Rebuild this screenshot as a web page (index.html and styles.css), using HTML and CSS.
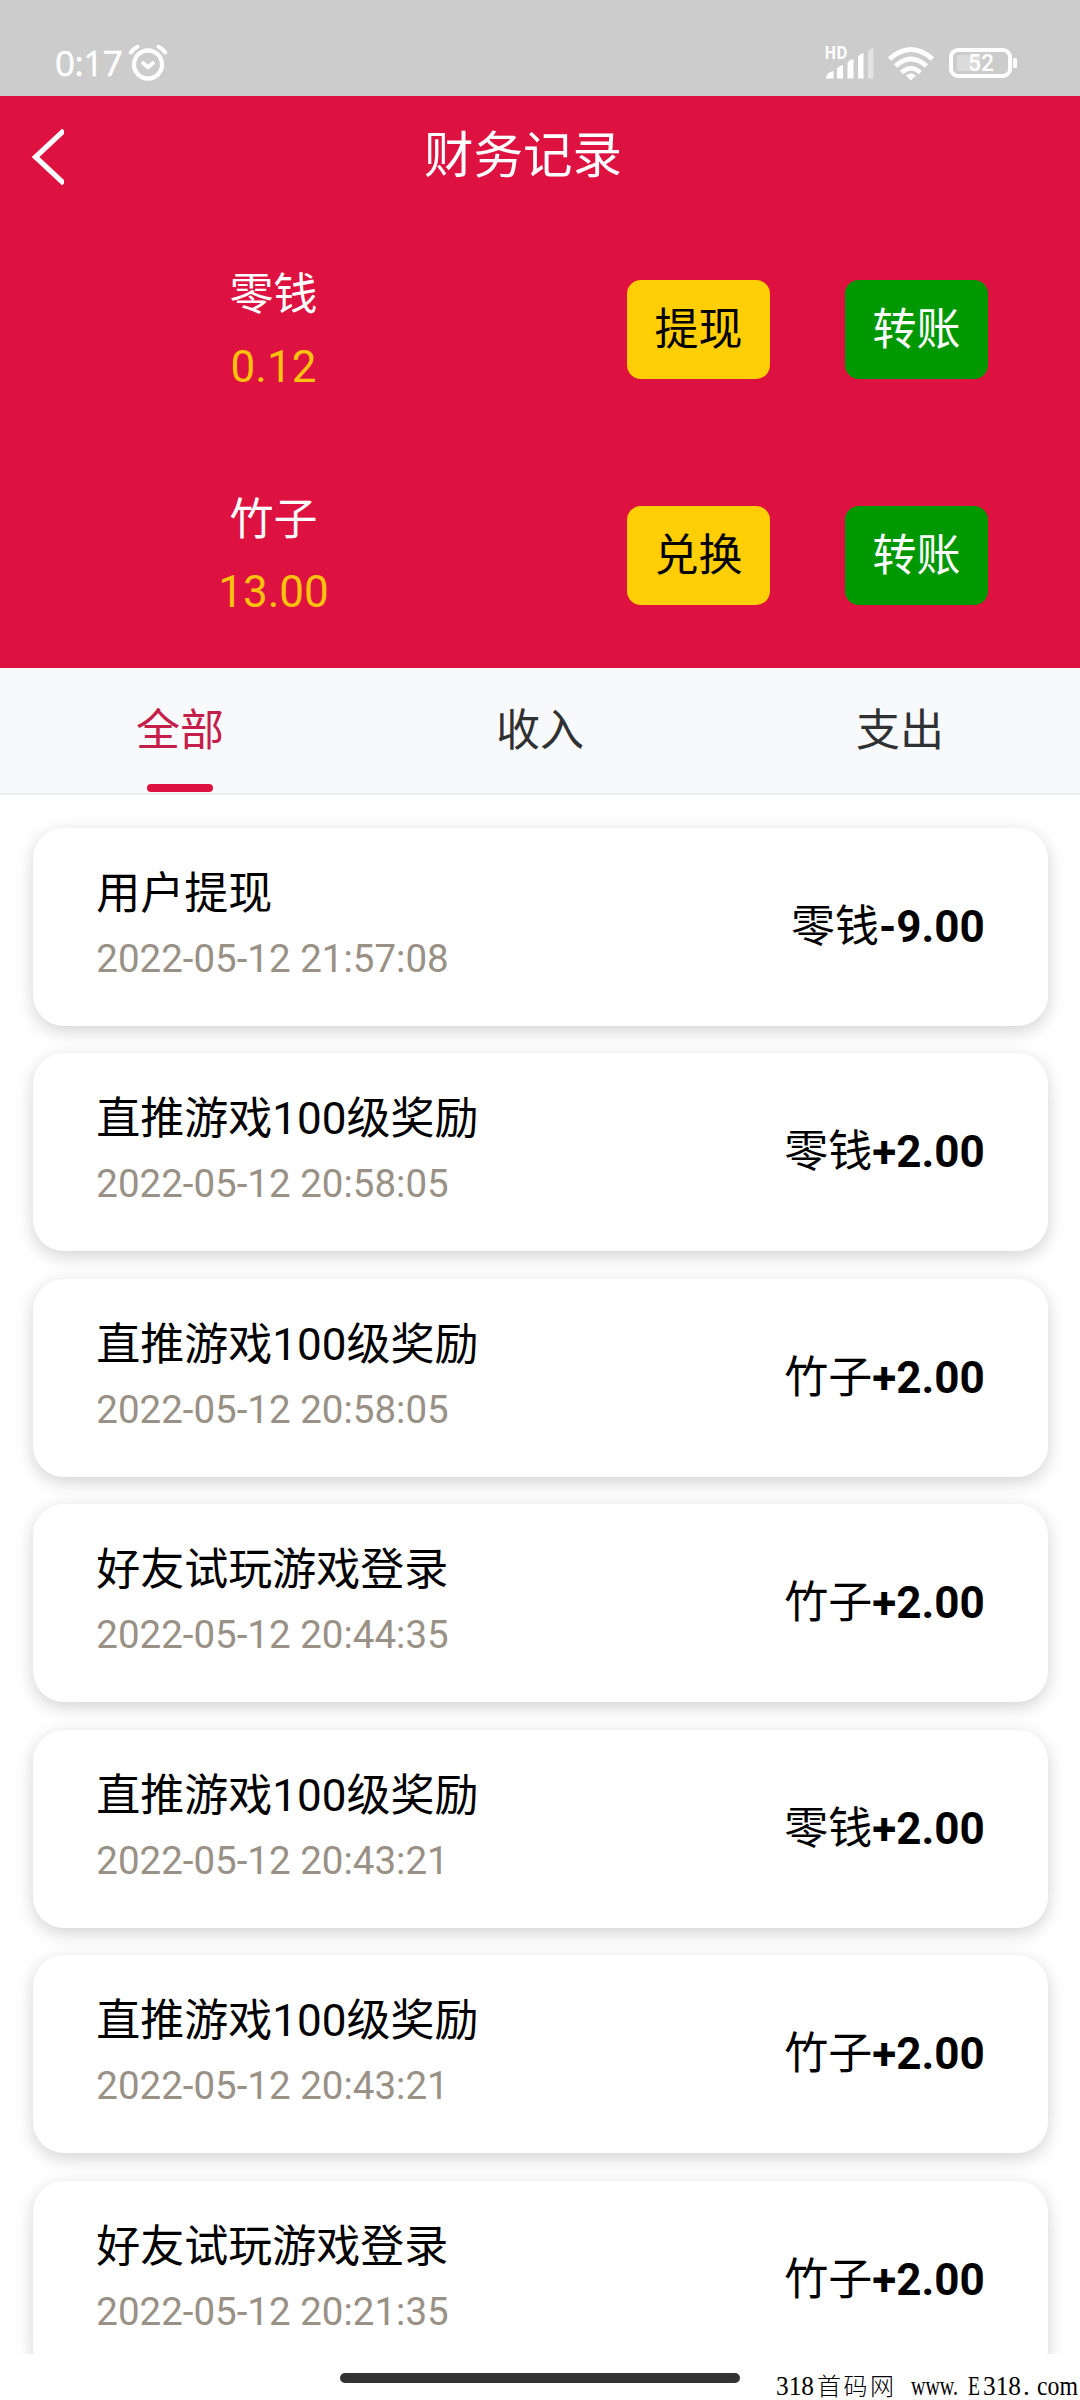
FILE: index.html
```html
<!DOCTYPE html>
<html lang="zh-CN">
<head>
<meta charset="utf-8">
<title>财务记录</title>
<link rel="stylesheet" href="styles.css">
</head>
<body>
<div class="screen">
  <div class="status">
    <div class="status-side">
      <span class="clock">0:17</span>
      <svg class="alarm" width="40" height="38" viewBox="0 0 40 38" fill="none" stroke="#fff" stroke-linecap="round" stroke-linejoin="round">
        <circle cx="20" cy="20.500" r="14" stroke-width="4.300"/>
        <path d="M15 19l5 4.200 5-4.200" stroke-width="3.800"/>
        <path d="M2.800 8.500Q5.500 5 9.500 2.800M37.200 8.500Q34.500 5 30.500 2.800" stroke-width="4"/>
      </svg>
    </div>
    <div class="status-side">
      <svg class="signal" width="54" height="36" viewBox="-2 -2 54 36" fill="#fff">
        <text class="hd" x=".5" y="12.500" textLength="23" lengthAdjust="spacingAndGlyphs">HD</text>
        <path d="M2 32.500Q2 26.500 9.500 25V32.500zM13 32.500V22.500Q15 19.500 19 19V32.500zM23.500 32.500V16.500Q25.500 13.500 29.500 13V32.500zM34 32.500V10.500Q36 7.500 39.500 7V32.500z"/>
        <path d="M44 32.500V5.500Q46 2.500 49.500 2V32.500z" opacity=".45"/>
      </svg>
      <svg class="wifi" width="48" height="36" viewBox="0 0 48 36" fill="none" stroke="#fff" stroke-width="5">
        <path d="M2.500 13Q24-6 45.500 13"/>
        <path d="M8.500 20Q24 6 39.500 20"/>
        <path d="M14.500 26.500Q24 18 33.500 26.500" stroke-width="4.500"/>
        <path d="M24 34.500l-5-5Q24 25.500 29 29.500z" fill="#fff" stroke="none"/>
      </svg>
      <svg class="battery" width="70" height="32" viewBox="0 0 70 32" fill="none">
        <rect x="2" y="3" width="59" height="26" rx="7" stroke="#fff" stroke-width="4"/>
        <rect x="8" y="8" width="23" height="16" rx="2" fill="#fff" opacity=".3"/>
        <rect x="64" y="11" width="4" height="10" rx="1.500" fill="#fff"/>
        <text class="level" x="19" y="24" textLength="26" lengthAdjust="spacingAndGlyphs">52</text>
      </svg>
    </div>
  </div>

  <header class="hero">
    <div class="navbar">
      <svg class="back" width="32" height="56" viewBox="0 0 32 56" fill="none" stroke="#fff" stroke-width="5.200"><path d="M32 1.500L3.500 28 32 54.500"/></svg>
      <h1 class="title">财务记录</h1>
    </div>
    <div class="balance">
      <div class="wallet"><div class="label">零钱</div><div class="value">0.12</div></div>
      <button class="btn yellow">提现</button>
      <button class="btn green">转账</button>
    </div>
    <div class="balance">
      <div class="wallet"><div class="label">竹子</div><div class="value">13.00</div></div>
      <button class="btn yellow">兑换</button>
      <button class="btn green">转账</button>
    </div>
  </header>

  <nav class="tabs">
    <div class="tab active">全部</div>
    <div class="tab">收入</div>
    <div class="tab">支出</div>
  </nav>

  <main class="list">
    <div class="card"><div><div class="name">用户提现</div><div class="date">2022-05-12 21:57:08</div></div><div class="amount">零钱<b>-9.00</b></div></div>
    <div class="card"><div><div class="name">直推游戏100级奖励</div><div class="date">2022-05-12 20:58:05</div></div><div class="amount">零钱<b>+2.00</b></div></div>
    <div class="card"><div><div class="name">直推游戏100级奖励</div><div class="date">2022-05-12 20:58:05</div></div><div class="amount">竹子<b>+2.00</b></div></div>
    <div class="card"><div><div class="name">好友试玩游戏登录</div><div class="date">2022-05-12 20:44:35</div></div><div class="amount">竹子<b>+2.00</b></div></div>
    <div class="card"><div><div class="name">直推游戏100级奖励</div><div class="date">2022-05-12 20:43:21</div></div><div class="amount">零钱<b>+2.00</b></div></div>
    <div class="card"><div><div class="name">直推游戏100级奖励</div><div class="date">2022-05-12 20:43:21</div></div><div class="amount">竹子<b>+2.00</b></div></div>
    <div class="card"><div><div class="name">好友试玩游戏登录</div><div class="date">2022-05-12 20:21:35</div></div><div class="amount">竹子<b>+2.00</b></div></div>
  </main>

  <footer class="gesture">
    <div class="home-bar"></div>
    <svg class="watermark" width="304" height="36" viewBox="0 0 304 36">
      <text x="0" y="31" textLength="38" lengthAdjust="spacingAndGlyphs">318</text>
      <text class="cn" x="41" y="31" textLength="77" lengthAdjust="spacing">首码网</text>
      <text x="135" y="31" textLength="47" lengthAdjust="spacingAndGlyphs">www.</text>
      <text x="192" y="31" textLength="12" lengthAdjust="spacingAndGlyphs">E</text>
      <text x="207" y="31" textLength="38" lengthAdjust="spacingAndGlyphs">318</text>
      <text x="247" y="31">.</text>
      <text x="261" y="31" textLength="41" lengthAdjust="spacingAndGlyphs">com</text>
    </svg>
  </footer>
</div>
</body>
</html>
```
FILE: styles.css
```css
* { box-sizing: border-box; }

body {
  margin: 0;
  background: #fff;
  color: #000;
  font-family: Roboto, "Noto Sans CJK SC", sans-serif;
  font-size: 44px;
}

.screen {
  width: 1080px;
  height: 2400px;
  display: flex;
  flex-direction: column;
  overflow: hidden;
}

.status {
  height: 96px;
  flex: none;
  display: flex;
  justify-content: space-between;
  padding: 44px 61px 0 55px;
  background: #ccc;
  color: #fff;
}
.status-side { display: flex; align-items: flex-start; height: 38px; }
.clock {
  width: 73px;
  font: 500 35px/38px "Open Sans", "Noto Sans", sans-serif;
  -webkit-text-stroke: .5px #fff;
  letter-spacing: -.5px;
}
.signal { margin: 0 11px 0 0; overflow: visible; }
.hd { font: 700 17px "Open Sans", sans-serif; }
.wifi { margin: 2px 14px 0 0; }
.battery { margin-top: 3px; }
.level { font: 500 23px Roboto, sans-serif; fill: #fff; }

.hero {
  height: 572px;
  flex: none;
  background: #dd1240;
  color: #fff;
}
.navbar {
  height: 121px;
  display: grid;
  grid-template-columns: 66px 1fr 100px;
  align-items: center;
}
.back { margin-left: 32px; }
.title {
  margin: 0;
  padding-bottom: 1px;
  font-size: 49.5px;
  line-height: 72px;
  font-weight: 400;
  text-align: center;
}
.balance {
  height: 225.5px;
  display: grid;
  grid-template-columns: 547px 143px 143px;
  column-gap: 75px;
  column-gap: 0;
  justify-content: start;
  align-items: center;
}
.label { line-height: 74px; text-align: center; }
.value { line-height: 70px; text-align: center; color: #fdc20e; }
.btn {
  width: 143px;
  height: 99px;
  padding: 2px 0 0;
  border: 0;
  border-radius: 14px;
  font: inherit;
  line-height: 97px;
}
.yellow { margin-left: 80px; background: #ffce04; color: #000; }
.green { margin-left: 155px; background: #009800; color: #fff; }

.tabs {
  height: 127px;
  flex: none;
  display: grid;
  grid-template-columns: repeat(3, 1fr);
  background: #f8f9fb;
  border-bottom: 2px solid #eef0f0;
  color: #303133;
}
.tab { position: relative; text-align: center; line-height: 127px; height: 125px; }
.active { color: #c51e4a; }
.active::after {
  content: "";
  position: absolute;
  left: 50%;
  bottom: 1px;
  width: 66px;
  height: 8px;
  margin-left: -33px;
  border-radius: 4px;
  background: #dd1240;
}

.list {
  height: 1559px;
  flex: none;
  display: flex;
  flex-direction: column;
  gap: 27.5px;
  padding: 32.6px 32px 0 33px;
  overflow: hidden;
}
.card {
  height: 198px;
  flex: none;
  display: flex;
  align-items: center;
  justify-content: space-between;
  padding: 0 63.25px;
  border-radius: 31px;
  background: #fff;
  box-shadow: 0 5px 18px rgba(0, 0, 0, .18);
}
.name { line-height: 65px; }
.date { margin-bottom: 1px; font-size: 38.5px; line-height: 64px; color: #999086; }
.amount { padding-top: 1px; line-height: 65px; }
.amount b { font-weight: 700; }

.gesture { position: relative; flex: 1; padding-top: 19px; }
.home-bar {
  width: 400px;
  height: 10px;
  margin: 0 auto;
  border-radius: 5px;
  background: #333;
}
.watermark {
  position: absolute;
  right: 0;
  bottom: 0;
  overflow: visible;
  font: 27px "Liberation Serif", serif;
}
.cn { font: 300 24px "Noto Sans CJK SC", sans-serif; }
```
